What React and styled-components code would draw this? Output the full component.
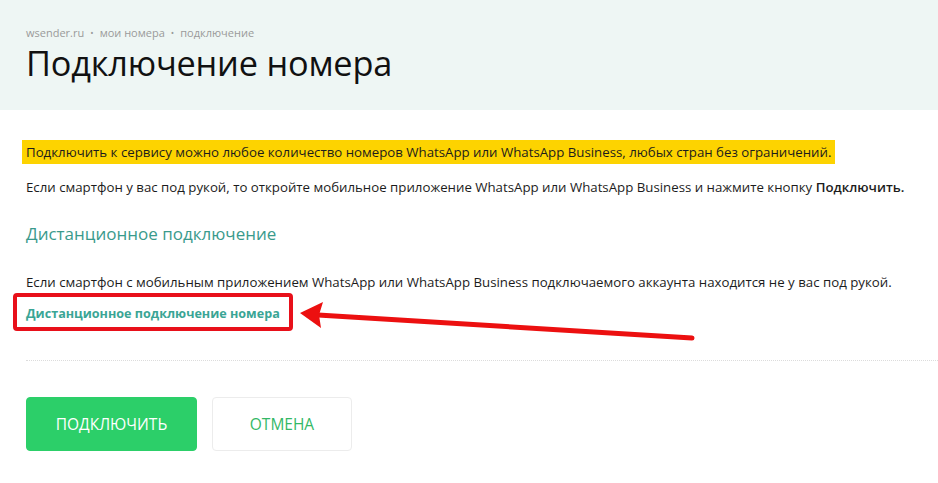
import React from "react";
import styled, { createGlobalStyle } from "styled-components";

const GlobalStyle = createGlobalStyle`
  body {
    margin: 0;
    background: #ffffff;
    font-family: 'Open Sans', 'Noto Sans', sans-serif;
    color: #1c1c1c;
  }
`;

const Page = styled.div`
  width: 938px;
  height: 483px;
  overflow: hidden;
  position: relative;
`;

const Header = styled.header`
  background: #eef6f4;
  height: 110px;
  box-sizing: border-box;
  padding: 26px 26px 0;
`;

const Crumbs = styled.div`
  display: flex;
  align-items: center;
  gap: 6px;
  font-size: 11px;
  color: #9a9a9a;
  line-height: 14px;
`;

const Dot = styled.span`
  font-size: 9px;
`;

const Title = styled.h1`
  margin: 2px 0 0;
  font-size: 34.3px;
  font-weight: 400;
  line-height: 42px;
  color: #111;
  letter-spacing: -0.2px;
`;

const Content = styled.section`
  position: relative;
  padding: 30px 0 0 26px;
`;

const Highlight = styled.p`
  margin: 0;
  font-size: 13.25px;
  line-height: 24px;

  span {
    background: #fdd300;
    padding: 3px 4px 3px 4px;
    margin-left: -4px;
  }
`;

const Text = styled.p`
  margin: ${(p) => p.$mt || 0} 0 0;
  font-size: 13.25px;
  line-height: 20px;
  color: #1c1c1c;

  b {
    font-weight: 600;
  }
`;

const Subtitle = styled.h2`
  margin: 25px 0 0;
  font-size: 17px;
  font-weight: 400;
  line-height: 24px;
  color: #3a9a8c;
`;

const LinkBox = styled.div`
  display: inline-block;
  margin: 1px 0 0 -13px;
  padding: 4px 9px 4px 9px;
  border: 4px solid #e8101a;
  border-radius: 4px;
`;

const Link = styled.a`
  font-size: 12.6px;
  font-weight: 700;
  color: #3aa595;
  text-decoration: none;
  line-height: 18px;
`;

const Separator = styled.hr`
  margin: 29px 0 0;
  border: 0;
  border-top: 1px dotted #dcdcdc;
`;

const Actions = styled.div`
  display: flex;
  gap: 15px;
  margin-top: 36px;
`;

const Button = styled.button`
  height: 54px;
  width: ${(p) => p.$w}px;
  border-radius: 4px;
  font-family: inherit;
  font-size: 15.5px;
  text-transform: uppercase;
  cursor: pointer;
  background: ${(p) => (p.$primary ? "#2ccf69" : "#ffffff")};
  color: ${(p) => (p.$primary ? "#ffffff" : "#33b866")};
  border: 1px solid ${(p) => (p.$primary ? "#2ccf69" : "#ececec")};
`;

const Arrow = styled.svg`
  position: absolute;
  left: 0;
  top: 0;
  pointer-events: none;
`;

export default function App() {
  return (
    <Page>
      <GlobalStyle />
      <Header>
        <Crumbs>
          <span>wsender.ru</span>
          <Dot>•</Dot>
          <span>мои номера</span>
          <Dot>•</Dot>
          <span>подключение</span>
        </Crumbs>
        <Title>Подключение номера</Title>
      </Header>
      <Content>
        <Highlight>
          <span>
            Подключить к сервису можно любое количество номеров WhatsApp или
            WhatsApp Business, любых стран без ограничений.
          </span>
        </Highlight>
        <Text $mt="13px">
          Если смартфон у вас под рукой, то откройте мобильное приложение
          WhatsApp или WhatsApp Business и нажмите кнопку <b>Подключить.</b>
        </Text>
        <Subtitle>Дистанционное подключение</Subtitle>
        <Text $mt="26px">
          Если смартфон с мобильным приложением WhatsApp или WhatsApp Business
          подключаемого аккаунта находится не у вас под рукой.
        </Text>
        <LinkBox>
          <Link href="#">Дистанционное подключение номера</Link>
        </LinkBox>
        <Separator />
        <Actions>
          <Button $primary $w={171}>Подключить</Button>
          <Button $w={140}>Отмена</Button>
        </Actions>
      </Content>
      <Arrow width="938" height="483" viewBox="0 0 938 483">
        <line
          x1="692"
          y1="338"
          x2="318"
          y2="315"
          stroke="#ec1010"
          strokeWidth="5"
          strokeLinecap="round"
        />
        <polygon points="300,313 323,302 319,315 321,328" fill="#ec1010" />
      </Arrow>
    </Page>
  );
}
